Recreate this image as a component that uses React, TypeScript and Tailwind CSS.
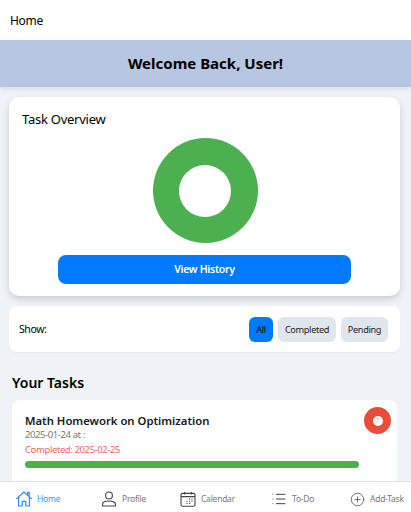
import { CirclePlus, List } from 'lucide-react';

const font = { fontFamily: '"Noto Sans", "Open Sans", sans-serif' };

function HomeIcon() {
  return (
    <svg width="16" height="16" viewBox="0 0 16 16" fill="none" stroke="currentColor" strokeWidth="1.2" strokeLinejoin="round" strokeLinecap="round">
      <path d="M0.6 7.6 8 1l7.4 6.6" />
      <path d="M2.6 6.4V15h3.6v-4.6h3.6V15h3.6V6.4" />
      <path d="M11.6 3.2V1.4h1.6v3.2" />
    </svg>
  );
}

function ProfileIcon() {
  return (
    <svg width="16" height="16" viewBox="0 0 16 16" fill="none" stroke="currentColor" strokeWidth="1.1">
      <circle cx="8" cy="4.4" r="3.4" />
      <path d="M1.5 15v-1.4c0-2.2 2.4-3.6 6.5-3.6s6.5 1.4 6.5 3.6V15z" strokeLinejoin="round" />
    </svg>
  );
}

function CalendarIcon() {
  return (
    <svg width="16" height="16" viewBox="0 0 16 16" fill="none" stroke="currentColor" strokeWidth="1.1">
      <rect x="1" y="2.4" width="14" height="12.8" rx="1.6" />
      <path d="M1 5.6h14M4.6 1v2.6M11.4 1v2.6" />
      <path d="M9 8h1.2M11.4 8h1.2M6.4 10.2h1.2M9 10.2h1.2M11.4 10.2h1.2M6.4 12.4h1.2M9 12.4h1.2" strokeWidth="1" />
    </svg>
  );
}

function NavItem({ icon, label, width, active }: { icon: React.ReactNode; label: string; width: string; active?: boolean }) {
  return (
    <div className={`flex shrink-0 items-center gap-[5px] ${width} ${active ? 'text-[#2d8cf7]' : 'text-[#444]'}`}>
      {icon}
      <span className={`pt-[1px] text-[8.5px] tracking-[-0.25px] ${active ? 'text-[#3f95f5]' : 'text-[#777]'}`}>{label}</span>
    </div>
  );
}

export default function App() {
  return (
    <div className="relative h-[512px] w-[411px] overflow-hidden bg-[#eff3f8] text-black" style={font}>
      <div className="flex h-10 items-center bg-white pt-[1px] pl-[10px] text-[12px] tracking-[-0.3px]">Home</div>
      <div className="flex h-[47px] items-center justify-center bg-[#b7c7e1] shadow-[0_2px_4px_rgba(0,0,0,0.1)]">
        <h1 className="text-[15px] font-bold">Welcome Back, User!</h1>
      </div>

      <div className="ml-[9px] mr-[11px] mt-[10px] flex h-[199px] flex-col rounded-[10px] bg-white px-[13px] shadow-[0_3px_7px_rgba(0,0,0,0.16)]">
        <h2 className="mt-[12px] text-[13px] leading-5 tracking-[-0.25px]">Task Overview</h2>
        <div className="ml-[1px] mt-[9px] flex justify-center">
          <div className="flex h-[105px] w-[105px] items-center justify-center rounded-full bg-[#4caf50]">
            <div className="mr-[1px] h-[52px] w-[52px] rounded-full bg-white" />
          </div>
        </div>
        <button className="mx-auto mt-[12px] h-[29px] w-[293px] rounded-lg bg-[#007bff] text-[10.5px] font-semibold tracking-[-0.3px] text-white">
          View History
        </button>
      </div>

      <div className="ml-[9px] mr-[11px] mt-[10px] flex h-[46px] items-center justify-between rounded-lg bg-white pl-[10px] pr-[12px] shadow-[0_1px_2px_rgba(0,0,0,0.04)]">
        <span className="pt-[2px] text-[10.5px] tracking-[-0.4px]">Show:</span>
        <div className="flex gap-[5px] text-[9.2px] tracking-[-0.35px]">
          <button className="h-[25px] w-6 rounded-md bg-[#007bff] pt-[1px]">All</button>
          <button className="h-[25px] w-[58px] rounded-md bg-[#e0e6ed] pt-[1px] text-[#222]">Completed</button>
          <button className="h-[25px] w-[47px] rounded-md bg-[#e0e6ed] pt-[1px] text-[#222]">Pending</button>
        </div>
      </div>

      <h2 className="ml-3 mt-[21px] text-[14px] leading-5 font-semibold">Your Tasks</h2>

      <div className="relative ml-3 mr-[14px] mt-[7px] h-[110px] rounded-lg bg-white px-[13px] pt-[13px]">
        <h3 className="text-[11.3px] leading-[16px] font-semibold text-[#14181f]">Math Homework on Optimization</h3>
        <p className="mt-[-1px] text-[9.5px] leading-[13px] tracking-[-0.4px] text-[#777]">2025-01-24 at :</p>
        <p className="mt-[2px] text-[9.5px] leading-[13px] tracking-[-0.4px] text-[#f06a63]">Completed: 2025-02-25</p>
        <div className="mt-[5px] h-[7px] w-[334px] rounded-full bg-[#4caf50]" />
        <div className="absolute right-[6px] top-[7px] flex h-[27px] w-[27px] items-center justify-center rounded-full bg-[#ea4c3a]">
          <div className="flex h-[10px] w-[10px] items-center justify-center rounded-full bg-white text-[7px] leading-none text-[#f0a49b]">?</div>
        </div>
      </div>

      <nav className="absolute bottom-0 left-0 flex h-[31px] w-full items-center border-t border-[#e2e2e2] bg-white pl-4 pt-[4px]">
        <NavItem active width="w-[85px]" label="Home" icon={<HomeIcon />} />
        <NavItem width="w-[79px]" label="Profile" icon={<ProfileIcon />} />
        <NavItem width="w-[91px]" label="Calendar" icon={<CalendarIcon />} />
        <NavItem width="w-[79px]" label="To-Do" icon={<List size={16} strokeWidth={1.5} />} />
        <NavItem width="w-[60px]" label="Add-Task" icon={<CirclePlus size={15} strokeWidth={1.2} />} />
      </nav>
    </div>
  );
}
